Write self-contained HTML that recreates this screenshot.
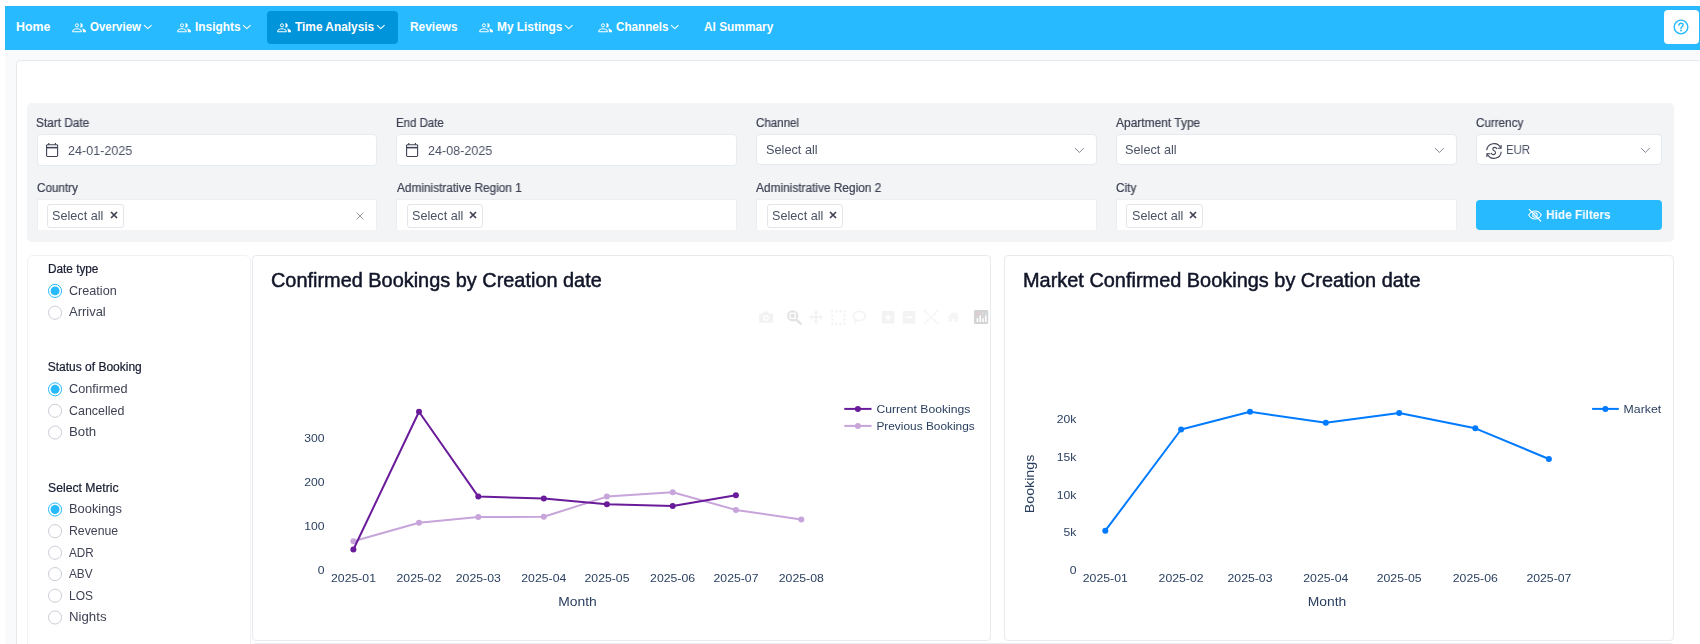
<!DOCTYPE html>
<html lang="en">
<head>
<meta charset="utf-8">
<title>Time Analysis</title>
<style>
*{box-sizing:border-box;margin:0;padding:0}
html,body{width:1700px;height:644px;overflow:hidden;background:#fff}
body{font-family:"Liberation Sans",sans-serif;color:#3f4254;position:relative;-webkit-font-smoothing:antialiased}
.abs{position:absolute}
.t{position:absolute;white-space:nowrap;line-height:1;transform-origin:0 0}
/* app background */
#app{position:absolute;left:5px;top:6px;width:1695px;height:638px;background:#f9fafb}
/* nav */
#nav{position:absolute;left:5px;top:6px;width:1695px;height:44px;background:#27baff}
#pill{position:absolute;left:267px;top:11px;width:131px;height:33px;background:#0094da;border-radius:4px}
#help{position:absolute;left:1664px;top:10px;width:35px;height:34px;background:#fff;border-radius:4px}
/* main card */
#card{position:absolute;left:16px;top:60px;width:1700px;height:600px;background:#fff;border:1px solid #e8eaee;border-radius:4px}
/* filter panel */
#fp{position:absolute;left:27px;top:103px;width:1647px;height:139px;background:#f3f4f6;border-radius:5px}
.inp{position:absolute;background:#fff;border:1px solid #eceef1;border-radius:4px;height:31px}
.inp2{position:absolute;background:#fff;border:1px solid #eceef1;border-bottom:none;border-radius:0;height:31px}
.tag{position:absolute;top:5px;left:10px;height:24px;width:76.5px;border:1px solid #e3e5ea;border-radius:3px;background:#fff}
#hide{position:absolute;left:1476px;top:200px;width:186px;height:30px;background:#27baff;border-radius:4px}
/* lower */
#side{position:absolute;left:27px;top:255px;width:224px;height:400px;background:#fff;border:1px solid #f1f2f5;border-radius:6px}
.chart{position:absolute;top:255px;height:386px;background:#fff;border:1px solid #e8eaee;border-radius:4px}
svg{position:absolute;overflow:visible}
svg text{font-family:"Liberation Sans",sans-serif;fill:#2a3f5f}
</style>
</head>
<body>
<div id="app"></div>
<div id="nav"></div>
<div id="pill"></div>
<div id="help"></div>
<div id="card"></div>
<div id="fp"></div>
<div class="t" style="left:15.59px;top:19.77px;font-size:13.5px;font-weight:bold;color:#fff;transform:scaleX(0.9144);">Home</div>
<div class="t" style="left:90.05px;top:19.77px;font-size:13.5px;font-weight:bold;color:#fff;transform:scaleX(0.8483);">Overview</div>
<div class="t" style="left:195.12px;top:19.77px;font-size:13.5px;font-weight:bold;color:#fff;transform:scaleX(0.8800);">Insights</div>
<div class="t" style="left:295.42px;top:19.77px;font-size:13.5px;font-weight:bold;color:#fff;transform:scaleX(0.8794);">Time Analysis</div>
<div class="t" style="left:409.62px;top:19.77px;font-size:13.5px;font-weight:bold;color:#fff;transform:scaleX(0.8827);">Reviews</div>
<div class="t" style="left:496.62px;top:19.77px;font-size:13.5px;font-weight:bold;color:#fff;transform:scaleX(0.8791);">My Listings</div>
<div class="t" style="left:615.74px;top:19.77px;font-size:13.5px;font-weight:bold;color:#fff;transform:scaleX(0.8660);">Channels</div>
<div class="t" style="left:704.26px;top:19.77px;font-size:13.5px;font-weight:bold;color:#fff;transform:scaleX(0.8793);">AI Summary</div>
<svg style="left:72.1px;top:22.6px" width="14" height="10" viewBox="0 0 14 10" fill="none"><circle cx="4.95" cy="2.35" r="1.55" stroke="#fff" stroke-width="1"/><path d="M8.1 0.3 A2.15 2.15 0 1 1 8.1 4.5 A3.6 3.6 0 0 0 8.1 0.3Z" fill="#fff"/><path d="M0.55 8.75 H9.45 V8.2 C9.45 6.65 6.7 5.75 5 5.75 C3.3 5.75 0.55 6.65 0.55 8.2Z" stroke="#fff" stroke-width="1" stroke-linejoin="round"/><path d="M10.9 9.25 H14 V8.2 C14 6.65 11.9 5.75 10.1 5.4 C10.7 6.15 10.9 6.95 10.9 7.95Z" fill="#fff"/></svg><svg style="left:144.2px;top:25.3px" width="7.6" height="4.2" viewBox="0 0 7.6 4.2" fill="none"><path d="M0.3 0.3 L3.8 3.7 L7.3 0.3" stroke="#fff" stroke-width="1.05" stroke-linecap="round" stroke-linejoin="round"/></svg><svg style="left:176.8px;top:22.6px" width="14" height="10" viewBox="0 0 14 10" fill="none"><circle cx="4.95" cy="2.35" r="1.55" stroke="#fff" stroke-width="1"/><path d="M8.1 0.3 A2.15 2.15 0 1 1 8.1 4.5 A3.6 3.6 0 0 0 8.1 0.3Z" fill="#fff"/><path d="M0.55 8.75 H9.45 V8.2 C9.45 6.65 6.7 5.75 5 5.75 C3.3 5.75 0.55 6.65 0.55 8.2Z" stroke="#fff" stroke-width="1" stroke-linejoin="round"/><path d="M10.9 9.25 H14 V8.2 C14 6.65 11.9 5.75 10.1 5.4 C10.7 6.15 10.9 6.95 10.9 7.95Z" fill="#fff"/></svg><svg style="left:243.2px;top:25.3px" width="7.6" height="4.2" viewBox="0 0 7.6 4.2" fill="none"><path d="M0.3 0.3 L3.8 3.7 L7.3 0.3" stroke="#fff" stroke-width="1.05" stroke-linecap="round" stroke-linejoin="round"/></svg><svg style="left:276.8px;top:22.6px" width="14" height="10" viewBox="0 0 14 10" fill="none"><circle cx="4.95" cy="2.35" r="1.55" stroke="#fff" stroke-width="1"/><path d="M8.1 0.3 A2.15 2.15 0 1 1 8.1 4.5 A3.6 3.6 0 0 0 8.1 0.3Z" fill="#fff"/><path d="M0.55 8.75 H9.45 V8.2 C9.45 6.65 6.7 5.75 5 5.75 C3.3 5.75 0.55 6.65 0.55 8.2Z" stroke="#fff" stroke-width="1" stroke-linejoin="round"/><path d="M10.9 9.25 H14 V8.2 C14 6.65 11.9 5.75 10.1 5.4 C10.7 6.15 10.9 6.95 10.9 7.95Z" fill="#fff"/></svg><svg style="left:376.9px;top:25.3px" width="7.6" height="4.2" viewBox="0 0 7.6 4.2" fill="none"><path d="M0.3 0.3 L3.8 3.7 L7.3 0.3" stroke="#fff" stroke-width="1.05" stroke-linecap="round" stroke-linejoin="round"/></svg><svg style="left:478.8px;top:22.6px" width="14" height="10" viewBox="0 0 14 10" fill="none"><circle cx="4.95" cy="2.35" r="1.55" stroke="#fff" stroke-width="1"/><path d="M8.1 0.3 A2.15 2.15 0 1 1 8.1 4.5 A3.6 3.6 0 0 0 8.1 0.3Z" fill="#fff"/><path d="M0.55 8.75 H9.45 V8.2 C9.45 6.65 6.7 5.75 5 5.75 C3.3 5.75 0.55 6.65 0.55 8.2Z" stroke="#fff" stroke-width="1" stroke-linejoin="round"/><path d="M10.9 9.25 H14 V8.2 C14 6.65 11.9 5.75 10.1 5.4 C10.7 6.15 10.9 6.95 10.9 7.95Z" fill="#fff"/></svg><svg style="left:564.9px;top:25.3px" width="7.6" height="4.2" viewBox="0 0 7.6 4.2" fill="none"><path d="M0.3 0.3 L3.8 3.7 L7.3 0.3" stroke="#fff" stroke-width="1.05" stroke-linecap="round" stroke-linejoin="round"/></svg><svg style="left:598.3px;top:22.6px" width="14" height="10" viewBox="0 0 14 10" fill="none"><circle cx="4.95" cy="2.35" r="1.55" stroke="#fff" stroke-width="1"/><path d="M8.1 0.3 A2.15 2.15 0 1 1 8.1 4.5 A3.6 3.6 0 0 0 8.1 0.3Z" fill="#fff"/><path d="M0.55 8.75 H9.45 V8.2 C9.45 6.65 6.7 5.75 5 5.75 C3.3 5.75 0.55 6.65 0.55 8.2Z" stroke="#fff" stroke-width="1" stroke-linejoin="round"/><path d="M10.9 9.25 H14 V8.2 C14 6.65 11.9 5.75 10.1 5.4 C10.7 6.15 10.9 6.95 10.9 7.95Z" fill="#fff"/></svg><svg style="left:670.8px;top:25.3px" width="7.6" height="4.2" viewBox="0 0 7.6 4.2" fill="none"><path d="M0.3 0.3 L3.8 3.7 L7.3 0.3" stroke="#fff" stroke-width="1.05" stroke-linecap="round" stroke-linejoin="round"/></svg><svg style="left:1673px;top:19px" width="16" height="16" viewBox="0 0 16 16" fill="none"><circle cx="8" cy="8" r="6.85" stroke="#27baff" stroke-width="1.4"/><path d="M5.9 6.3 C5.9 4.9 6.9 4.2 8 4.2 C9.2 4.2 10.1 5 10.1 6.1 C10.1 7.6 8 7.8 8 9.4" stroke="#27baff" stroke-width="1.4" stroke-linecap="round"/><circle cx="8" cy="11.5" r="0.9" fill="#27baff"/></svg>
<div class="inp" style="left:37px;top:134px;width:340px;height:32px;border-color:#e8ebef"></div>
<div class="inp" style="left:396px;top:134px;width:341px;height:32px;border-color:#e8ebef"></div>
<div class="inp" style="left:756px;top:134px;width:341px;height:31px;border-color:#e6e9ed"></div>
<div class="inp" style="left:1116px;top:134px;width:341px;height:31px;border-color:#e6e9ed"></div>
<div class="inp" style="left:1476px;top:134px;width:186px;height:31px;border-color:#e6e9ed"></div>
<svg style="left:46.05px;top:142.85px" width="13" height="15" viewBox="0 0 13 15" fill="none"><rect x="0.6" y="1.7" width="11" height="11.8" rx="0.9" stroke="#3f4254" stroke-width="1.1"/><path d="M0.6 4.65 H11.6" stroke="#3f4254" stroke-width="1.5"/><path d="M2.75 0.1 V1.7 M9.45 0.1 V1.7" stroke="#3f4254" stroke-width="1.1"/></svg>
<svg style="left:405.8px;top:142.85px" width="13" height="15" viewBox="0 0 13 15" fill="none"><rect x="0.6" y="1.7" width="11" height="11.8" rx="0.9" stroke="#3f4254" stroke-width="1.1"/><path d="M0.6 4.65 H11.6" stroke="#3f4254" stroke-width="1.5"/><path d="M2.75 0.1 V1.7 M9.45 0.1 V1.7" stroke="#3f4254" stroke-width="1.1"/></svg>
<svg style="left:1075.3px;top:148.1px" width="8.8" height="5.0" viewBox="0 0 8.8 5.0" fill="none"><path d="M0.3 0.3 L4.4 4.5 L8.5 0.3" stroke="#747988" stroke-width="0.9" stroke-linecap="round" stroke-linejoin="round"/></svg>
<svg style="left:1435.1px;top:148.1px" width="8.8" height="5.0" viewBox="0 0 8.8 5.0" fill="none"><path d="M0.3 0.3 L4.4 4.5 L8.5 0.3" stroke="#747988" stroke-width="0.9" stroke-linecap="round" stroke-linejoin="round"/></svg>
<svg style="left:1640.8px;top:148.3px" width="8.8" height="5.0" viewBox="0 0 8.8 5.0" fill="none"><path d="M0.3 0.3 L4.4 4.5 L8.5 0.3" stroke="#747988" stroke-width="0.9" stroke-linecap="round" stroke-linejoin="round"/></svg>
<svg style="left:1486.1px;top:143.4px" width="16" height="16" viewBox="0 0 16 16" fill="none"><path d="M0.75 7.3 A7.3 7.3 0 0 1 14.7 5.0 M15.25 8.7 A7.3 7.3 0 0 1 1.3 11.0" stroke="#3f4254" stroke-width="1.1"/><path d="M15.1 2.0 V5.3 H11.6 M0.9 14.0 V10.7 H4.4" stroke="#3f4254" stroke-width="1.1" stroke-linejoin="miter"/><path d="M10.7 5.6 C10.4 4.8 9.7 4.4 8.8 4.4 C7.6 4.4 6.8 5.1 6.8 6.0 C6.8 7.0 7.6 7.4 8.4 7.9 C9.2 8.4 9.8 8.9 9.5 10.0 C9.2 11.0 8.3 11.6 7.2 11.6 C6.2 11.6 5.5 11.1 5.3 10.2" stroke="#3f4254" stroke-width="1.1" stroke-linecap="round"/></svg>
<div class="inp2" style="left:37px;top:199px;width:340px"></div>
<div class="tag" style="left:47.20px;top:204px"></div>
<svg style="left:109.7px;top:211.2px" width="8" height="8" viewBox="0 0 8 8" fill="none"><path d="M1 1 L7 7 M7 1 L1 7" stroke="#3f4254" stroke-width="1.7"/></svg>
<div class="inp2" style="left:396px;top:199px;width:341px"></div>
<div class="tag" style="left:406.95px;top:204px"></div>
<svg style="left:469.45px;top:211.2px" width="8" height="8" viewBox="0 0 8 8" fill="none"><path d="M1 1 L7 7 M7 1 L1 7" stroke="#3f4254" stroke-width="1.7"/></svg>
<div class="inp2" style="left:756px;top:199px;width:341px"></div>
<div class="tag" style="left:766.70px;top:204px"></div>
<svg style="left:829.2px;top:211.2px" width="8" height="8" viewBox="0 0 8 8" fill="none"><path d="M1 1 L7 7 M7 1 L1 7" stroke="#3f4254" stroke-width="1.7"/></svg>
<div class="inp2" style="left:1116px;top:199px;width:341px"></div>
<div class="tag" style="left:1126.45px;top:204px"></div>
<svg style="left:1188.95px;top:211.2px" width="8" height="8" viewBox="0 0 8 8" fill="none"><path d="M1 1 L7 7 M7 1 L1 7" stroke="#3f4254" stroke-width="1.7"/></svg>
<svg style="left:356.0px;top:212.3px" width="8" height="8" viewBox="0 0 8 8" fill="none"><path d="M0.6 0.6 L7.4 7.4 M7.4 0.6 L0.6 7.4" stroke="#8a8f9c" stroke-width="0.9"/></svg>
<div id="hide"></div>
<svg style="left:1528.1px;top:207.7px" width="14" height="14" viewBox="0 0 14 14" fill="none"><path d="M0.7 7 C2.2 4.4 4.5 3 7 3 C9.5 3 11.8 4.4 13.3 7 C11.8 9.6 9.5 11 7 11 C4.5 11 2.2 9.6 0.7 7Z" stroke="#fff" stroke-width="1.05"/><circle cx="7" cy="7" r="2.2" stroke="#fff" stroke-width="1.05"/><path d="M1.2 1.4 L12.8 13.2" stroke="#fff" stroke-width="1.15" stroke-linecap="round"/></svg>
<div class="t" style="left:36.21px;top:116.64px;font-size:12px;color:#3f4254;-webkit-text-stroke:0.22px #3f4254;transform:scaleX(0.9872);will-change:transform;">Start Date</div>
<div class="t" style="left:395.74px;top:116.64px;font-size:12px;color:#3f4254;-webkit-text-stroke:0.22px #3f4254;transform:scaleX(0.9554);will-change:transform;">End Date</div>
<div class="t" style="left:756.29px;top:116.64px;font-size:12px;color:#3f4254;-webkit-text-stroke:0.22px #3f4254;transform:scaleX(0.9634);will-change:transform;">Channel</div>
<div class="t" style="left:1116.08px;top:116.64px;font-size:12px;color:#3f4254;-webkit-text-stroke:0.22px #3f4254;transform:scaleX(0.9955);will-change:transform;">Apartment Type</div>
<div class="t" style="left:1475.89px;top:116.64px;font-size:12px;color:#3f4254;-webkit-text-stroke:0.22px #3f4254;transform:scaleX(0.9700);will-change:transform;">Currency</div>
<div class="t" style="left:36.89px;top:181.64px;font-size:12px;color:#3f4254;-webkit-text-stroke:0.22px #3f4254;transform:scaleX(0.9742);will-change:transform;">Country</div>
<div class="t" style="left:396.58px;top:181.64px;font-size:12px;color:#3f4254;-webkit-text-stroke:0.22px #3f4254;transform:scaleX(0.9851);will-change:transform;">Administrative Region 1</div>
<div class="t" style="left:756.48px;top:181.64px;font-size:12px;color:#3f4254;-webkit-text-stroke:0.22px #3f4254;transform:scaleX(0.9890);will-change:transform;">Administrative Region 2</div>
<div class="t" style="left:1115.89px;top:181.64px;font-size:12px;color:#3f4254;-webkit-text-stroke:0.22px #3f4254;transform:scaleX(0.9778);will-change:transform;">City</div>
<div class="t" style="left:68.47px;top:144.63px;font-size:12.6px;color:#4b5264;transform:scaleX(0.9952);will-change:transform;">24-01-2025</div>
<div class="t" style="left:428.17px;top:144.63px;font-size:12.6px;color:#4b5264;transform:scaleX(0.9952);will-change:transform;">24-08-2025</div>
<div class="t" style="left:765.57px;top:143.80px;font-size:12.4px;color:#4b5264;transform:scaleX(1.0266);will-change:transform;">Select all</div>
<div class="t" style="left:1125.37px;top:143.80px;font-size:12.4px;color:#4b5264;transform:scaleX(1.0266);will-change:transform;">Select all</div>
<div class="t" style="left:1506.17px;top:143.80px;font-size:12.4px;color:#4b5264;transform:scaleX(0.9165);will-change:transform;">EUR</div>
<div class="t" style="left:52.38px;top:209.80px;font-size:12.4px;color:#4b5264;transform:scaleX(1.0205);will-change:transform;">Select all</div>
<div class="t" style="left:412.13px;top:209.80px;font-size:12.4px;color:#4b5264;transform:scaleX(1.0205);will-change:transform;">Select all</div>
<div class="t" style="left:771.88px;top:209.80px;font-size:12.4px;color:#4b5264;transform:scaleX(1.0205);will-change:transform;">Select all</div>
<div class="t" style="left:1131.63px;top:209.80px;font-size:12.4px;color:#4b5264;transform:scaleX(1.0205);will-change:transform;">Select all</div>
<div class="t" style="left:1545.99px;top:208.00px;font-size:13px;font-weight:bold;color:#fff;transform:scaleX(0.9130);will-change:transform;">Hide Filters</div>
<div id="side"></div>
<div class="chart" style="left:252px;width:739px"></div>
<div class="chart" style="left:1004px;width:670px"></div>
<div class="abs" style="left:253px;top:643px;width:1420px;height:2px;border-top:1px solid #e8eaee;border-radius:5px 5px 0 0"></div>
<svg style="left:0;top:0" width="300" height="644" viewBox="0 0 300 644">
<circle cx="55.05" cy="290.9" r="6.55" fill="#fff" stroke="#27baff" stroke-width="1"/><circle cx="55.05" cy="290.9" r="4.45" fill="#27baff"/>
<circle cx="55.05" cy="312.7" r="6.55" fill="#fff" stroke="#c8ccd5" stroke-width="1"/>
<circle cx="55.05" cy="389.3" r="6.55" fill="#fff" stroke="#27baff" stroke-width="1"/><circle cx="55.05" cy="389.3" r="4.45" fill="#27baff"/>
<circle cx="55.05" cy="410.8" r="6.55" fill="#fff" stroke="#c8ccd5" stroke-width="1"/>
<circle cx="55.05" cy="432.5" r="6.55" fill="#fff" stroke="#c8ccd5" stroke-width="1"/>
<circle cx="55.05" cy="509.5" r="6.55" fill="#fff" stroke="#27baff" stroke-width="1"/><circle cx="55.05" cy="509.5" r="4.45" fill="#27baff"/>
<circle cx="55.05" cy="531.2" r="6.55" fill="#fff" stroke="#c8ccd5" stroke-width="1"/>
<circle cx="55.05" cy="552.7" r="6.55" fill="#fff" stroke="#c8ccd5" stroke-width="1"/>
<circle cx="55.05" cy="574.1" r="6.55" fill="#fff" stroke="#c8ccd5" stroke-width="1"/>
<circle cx="55.05" cy="595.7" r="6.55" fill="#fff" stroke="#c8ccd5" stroke-width="1"/>
<circle cx="55.05" cy="617.5" r="6.55" fill="#fff" stroke="#c8ccd5" stroke-width="1"/>
</svg>
<div class="t" style="left:47.72px;top:262.64px;font-size:12px;color:#181c32;-webkit-text-stroke:0.22px #181c32;transform:scaleX(0.9817);">Date type</div>
<div class="t" style="left:47.70px;top:360.54px;font-size:12px;color:#181c32;-webkit-text-stroke:0.22px #181c32;">Status of Booking</div>
<div class="t" style="left:47.68px;top:481.64px;font-size:12px;color:#181c32;-webkit-text-stroke:0.22px #181c32;transform:scaleX(1.0169);">Select Metric</div>
<div class="t" style="left:69.26px;top:284.80px;font-size:12.4px;color:#3f4254;transform:scaleX(1.0182);">Creation</div>
<div class="t" style="left:69.47px;top:305.80px;font-size:12.4px;color:#3f4254;transform:scaleX(1.0465);">Arrival</div>
<div class="t" style="left:69.26px;top:382.80px;font-size:12.4px;color:#3f4254;transform:scaleX(1.0244);">Confirmed</div>
<div class="t" style="left:69.27px;top:404.80px;font-size:12.4px;color:#3f4254;transform:scaleX(1.0050);">Cancelled</div>
<div class="t" style="left:68.52px;top:425.80px;font-size:12.4px;color:#3f4254;transform:scaleX(1.0681);">Both</div>
<div class="t" style="left:68.55px;top:502.80px;font-size:12.4px;color:#3f4254;transform:scaleX(1.0383);">Bookings</div>
<div class="t" style="left:68.60px;top:524.80px;font-size:12.4px;color:#3f4254;transform:scaleX(0.9898);">Revenue</div>
<div class="t" style="left:69.48px;top:546.80px;font-size:12.4px;color:#3f4254;transform:scaleX(0.9434);">ADR</div>
<div class="t" style="left:69.48px;top:567.80px;font-size:12.4px;color:#3f4254;transform:scaleX(0.9502);">ABV</div>
<div class="t" style="left:68.62px;top:589.80px;font-size:12.4px;color:#3f4254;transform:scaleX(0.9660);">LOS</div>
<div class="t" style="left:68.52px;top:610.80px;font-size:12.4px;color:#3f4254;transform:scaleX(1.0676);">Nights</div>
<div class="t" style="left:270.57px;top:270.20px;font-size:20.2px;color:#111528;-webkit-text-stroke:0.5px #111528;transform:scaleX(0.9859);">Confirmed Bookings by Creation date</div>
<div class="t" style="left:1023.19px;top:270.20px;font-size:20.2px;color:#111528;-webkit-text-stroke:0.5px #111528;transform:scaleX(0.9867);">Market Confirmed Bookings by Creation date</div>
<svg style="left:0;top:0" width="1700" height="644" viewBox="0 0 1700 644">
<polyline points="353.4,541.3 419.0,522.7 478.3,517.0 543.8,516.8 606.9,496.6 672.7,492.2 735.9,509.9 801.3,519.6" fill="none" stroke="#c7a5da" stroke-width="2" stroke-linejoin="round"/><circle cx="353.4" cy="541.3" r="3" fill="#c7a5da"/><circle cx="419.0" cy="522.7" r="3" fill="#c7a5da"/><circle cx="478.3" cy="517.0" r="3" fill="#c7a5da"/><circle cx="543.8" cy="516.8" r="3" fill="#c7a5da"/><circle cx="606.9" cy="496.6" r="3" fill="#c7a5da"/><circle cx="672.7" cy="492.2" r="3" fill="#c7a5da"/><circle cx="735.9" cy="509.9" r="3" fill="#c7a5da"/><circle cx="801.3" cy="519.6" r="3" fill="#c7a5da"/>
<polyline points="353.4,549.5 419.0,411.8 478.3,496.6 543.8,498.4 606.9,504.3 672.7,505.9 735.9,495.3" fill="none" stroke="#6a1b9a" stroke-width="2" stroke-linejoin="round"/><circle cx="353.4" cy="549.5" r="3" fill="#6a1b9a"/><circle cx="419.0" cy="411.8" r="3" fill="#6a1b9a"/><circle cx="478.3" cy="496.6" r="3" fill="#6a1b9a"/><circle cx="543.8" cy="498.4" r="3" fill="#6a1b9a"/><circle cx="606.9" cy="504.3" r="3" fill="#6a1b9a"/><circle cx="672.7" cy="505.9" r="3" fill="#6a1b9a"/><circle cx="735.9" cy="495.3" r="3" fill="#6a1b9a"/>
<text transform="translate(353.50 581.90) scale(1.1252 1)" text-anchor="middle" font-size="10.9">2025-01</text>
<text transform="translate(419.00 581.90) scale(1.1252 1)" text-anchor="middle" font-size="10.9">2025-02</text>
<text transform="translate(478.30 581.90) scale(1.1252 1)" text-anchor="middle" font-size="10.9">2025-03</text>
<text transform="translate(543.80 581.90) scale(1.1252 1)" text-anchor="middle" font-size="10.9">2025-04</text>
<text transform="translate(607.00 581.90) scale(1.1252 1)" text-anchor="middle" font-size="10.9">2025-05</text>
<text transform="translate(672.60 581.90) scale(1.1252 1)" text-anchor="middle" font-size="10.9">2025-06</text>
<text transform="translate(736.00 581.90) scale(1.1252 1)" text-anchor="middle" font-size="10.9">2025-07</text>
<text transform="translate(801.30 581.90) scale(1.1252 1)" text-anchor="middle" font-size="10.9">2025-08</text>
<text transform="translate(324.40 441.60) scale(1.1150 1)" text-anchor="end" font-size="10.9">300</text>
<text transform="translate(324.40 485.80) scale(1.1150 1)" text-anchor="end" font-size="10.9">200</text>
<text transform="translate(324.40 529.80) scale(1.1150 1)" text-anchor="end" font-size="10.9">100</text>
<text transform="translate(324.40 573.90) scale(1.1150 1)" text-anchor="end" font-size="10.9">0</text>
<text transform="translate(577.50 606.00) scale(1.1293 1)" text-anchor="middle" font-size="12.3">Month</text>
<path d="M844.3 408.9 H871.5" stroke="#6a1b9a" stroke-width="2"/><circle cx="857.9" cy="408.9" r="3" fill="#6a1b9a"/>
<path d="M844.3 425.9 H871.5" stroke="#c7a5da" stroke-width="2"/><circle cx="857.9" cy="425.9" r="3" fill="#c7a5da"/>
<text transform="translate(876.40 412.70) scale(1.1164 1)" text-anchor="start" font-size="10.9">Current Bookings</text>
<text transform="translate(876.40 429.70) scale(1.0901 1)" text-anchor="start" font-size="10.9">Previous Bookings</text>
<path d="M759.2 313.4 h3.4 l0.9 -1.8 h4.4 l0.9 1.8 h4.2 v9.3 h-13.8z" fill="#f2f2f2"/><circle cx="766" cy="317.9" r="2.9" fill="#fff"/><circle cx="766" cy="317.9" r="1.6" fill="#f2f2f2"/><circle cx="792.7" cy="315.8" r="5.6" fill="#e3e3e3"/><path d="M796.2 319.6 L800.6 323.6" stroke="#e3e3e3" stroke-width="2.6" stroke-linecap="round"/><rect x="789.5" y="312.6" width="6.4" height="6.4" fill="#fff"/><rect x="790.8" y="313.9" width="3.8" height="3.8" fill="#e3e3e3"/><path d="M816.1 311.5 V322.5 M810.6 317 H821.6" stroke="#f3f3f3" stroke-width="1.8"/><path d="M816.1 309.9 l-3 3.3 h6z M816.1 324.1 l-3 -3.3 h6z M809 317 l3.3 -3 v6z M823.2 317 l-3.3 -3 v6z" fill="#f3f3f3"/><g fill="#f0f0f0"><rect x="831.3" y="310.4" width="2" height="2"/><rect x="831.3" y="314.5" width="2" height="2"/><rect x="831.3" y="318.6" width="2" height="2"/><rect x="831.3" y="322.7" width="2" height="2"/><rect x="835.4" y="310.4" width="2" height="2"/><rect x="835.4" y="322.7" width="2" height="2"/><rect x="839.5" y="310.4" width="2" height="2"/><rect x="839.5" y="322.7" width="2" height="2"/><rect x="843.6" y="310.4" width="2" height="2"/><rect x="843.6" y="314.5" width="2" height="2"/><rect x="843.6" y="318.6" width="2" height="2"/><rect x="843.6" y="322.7" width="2" height="2"/></g><ellipse cx="859.3" cy="315.9" rx="6" ry="4.7" fill="none" stroke="#f3f3f3" stroke-width="1.5"/><path d="M855.3 319.3 c-1.6 0.8 -1.2 2.8 0.8 2.4 c-0.6 0.9 -0.7 1.6 -0.9 2.2" fill="none" stroke="#f3f3f3" stroke-width="1.3"/><rect x="881.9" y="311" width="12.4" height="12.6" fill="#f3f3f3"/><path d="M888.1 314.2 V320.4 M885 317.3 H891.2" stroke="#fff" stroke-width="1.7"/><rect x="902.9" y="311" width="12.4" height="12.6" fill="#f3f3f3"/><path d="M905.6 317.3 H912.6" stroke="#fff" stroke-width="1.7"/><path d="M924.4 313 v-2.4 h2.4 M935.6 310.6 h2.4 v2.4 M938 321.4 v2.4 h-2.4 M926.8 323.8 h-2.4 v-2.4" stroke="#f4f4f4" stroke-width="1.1" fill="none"/><path d="M927 313.2 L935.4 321.2 M935.4 313.2 L927 321.2" stroke="#f6f6f6" stroke-width="1.2"/><path d="M926.3 312.5 h3 l-3 3z M936.1 312.5 h-3 l3 3z M926.3 321.9 h3 l-3 -3z M936.1 321.9 h-3 l3 -3z" fill="#f5f5f5"/><path d="M946.9 317.4 L953.2 311.8 L955.6 313.9 V312.4 H957 V315.2 L959.5 317.4 H957.8 V322 H954.6 V318.8 H951.8 V322 H948.6 V317.4z" fill="#f5f5f5"/><rect x="973.9" y="310" width="14.3" height="14" rx="1.6" fill="#d3d3d3"/><path d="M977.4 322 V318.2 M980.2 322 V315.4 M983 322 V318.2 M985.8 322 V315.4" stroke="#fff" stroke-width="1.6"/><path d="M976.6 313.2 h1.6 M979.4 313.2 h1.6 M976.6 316 h1.6" stroke="#f2c4d0" stroke-width="1.2"/><path d="M982.2 313.2 h1.6 M982.2 316 h1.6" stroke="#e4e4e8" stroke-width="1.2"/><path d="M985 313.2 h1.6" stroke="#cfe6f1" stroke-width="1.2"/>
</svg>
<svg style="left:0;top:0" width="1700" height="644" viewBox="0 0 1700 644">
<polyline points="1105.3,530.7 1181.1,429.5 1250.0,411.8 1325.8,422.7 1399.2,413.0 1475.3,428.3 1548.9,459.0" fill="none" stroke="#007bff" stroke-width="2" stroke-linejoin="round"/><circle cx="1105.3" cy="530.7" r="3" fill="#007bff"/><circle cx="1181.1" cy="429.5" r="3" fill="#007bff"/><circle cx="1250.0" cy="411.8" r="3" fill="#007bff"/><circle cx="1325.8" cy="422.7" r="3" fill="#007bff"/><circle cx="1399.2" cy="413.0" r="3" fill="#007bff"/><circle cx="1475.3" cy="428.3" r="3" fill="#007bff"/><circle cx="1548.9" cy="459.0" r="3" fill="#007bff"/>
<text transform="translate(1105.30 581.90) scale(1.1252 1)" text-anchor="middle" font-size="10.9">2025-01</text>
<text transform="translate(1181.10 581.90) scale(1.1252 1)" text-anchor="middle" font-size="10.9">2025-02</text>
<text transform="translate(1250.00 581.90) scale(1.1252 1)" text-anchor="middle" font-size="10.9">2025-03</text>
<text transform="translate(1325.80 581.90) scale(1.1252 1)" text-anchor="middle" font-size="10.9">2025-04</text>
<text transform="translate(1399.20 581.90) scale(1.1252 1)" text-anchor="middle" font-size="10.9">2025-05</text>
<text transform="translate(1475.30 581.90) scale(1.1252 1)" text-anchor="middle" font-size="10.9">2025-06</text>
<text transform="translate(1548.90 581.90) scale(1.1252 1)" text-anchor="middle" font-size="10.9">2025-07</text>
<text transform="translate(1076.40 423.00) scale(1.1150 1)" text-anchor="end" font-size="10.9">20k</text>
<text transform="translate(1076.40 460.60) scale(1.1150 1)" text-anchor="end" font-size="10.9">15k</text>
<text transform="translate(1076.40 498.90) scale(1.1150 1)" text-anchor="end" font-size="10.9">10k</text>
<text transform="translate(1076.40 536.00) scale(1.1150 1)" text-anchor="end" font-size="10.9">5k</text>
<text transform="translate(1076.40 573.90) scale(1.1150 1)" text-anchor="end" font-size="10.9">0</text>
<text transform="translate(1327.00 606.00) scale(1.1293 1)" text-anchor="middle" font-size="12.3">Month</text>
<text transform="translate(1033.80 484.00) rotate(-90) scale(1.1678 1)" text-anchor="middle" font-size="12.2">Bookings</text>
<path d="M1592.1 408.9 H1618.8" stroke="#007bff" stroke-width="2"/><circle cx="1605.4" cy="408.9" r="3" fill="#007bff"/>
<text transform="translate(1623.60 412.70) scale(1.1288 1)" text-anchor="start" font-size="10.9">Market</text>
</svg>
</body>
</html>
